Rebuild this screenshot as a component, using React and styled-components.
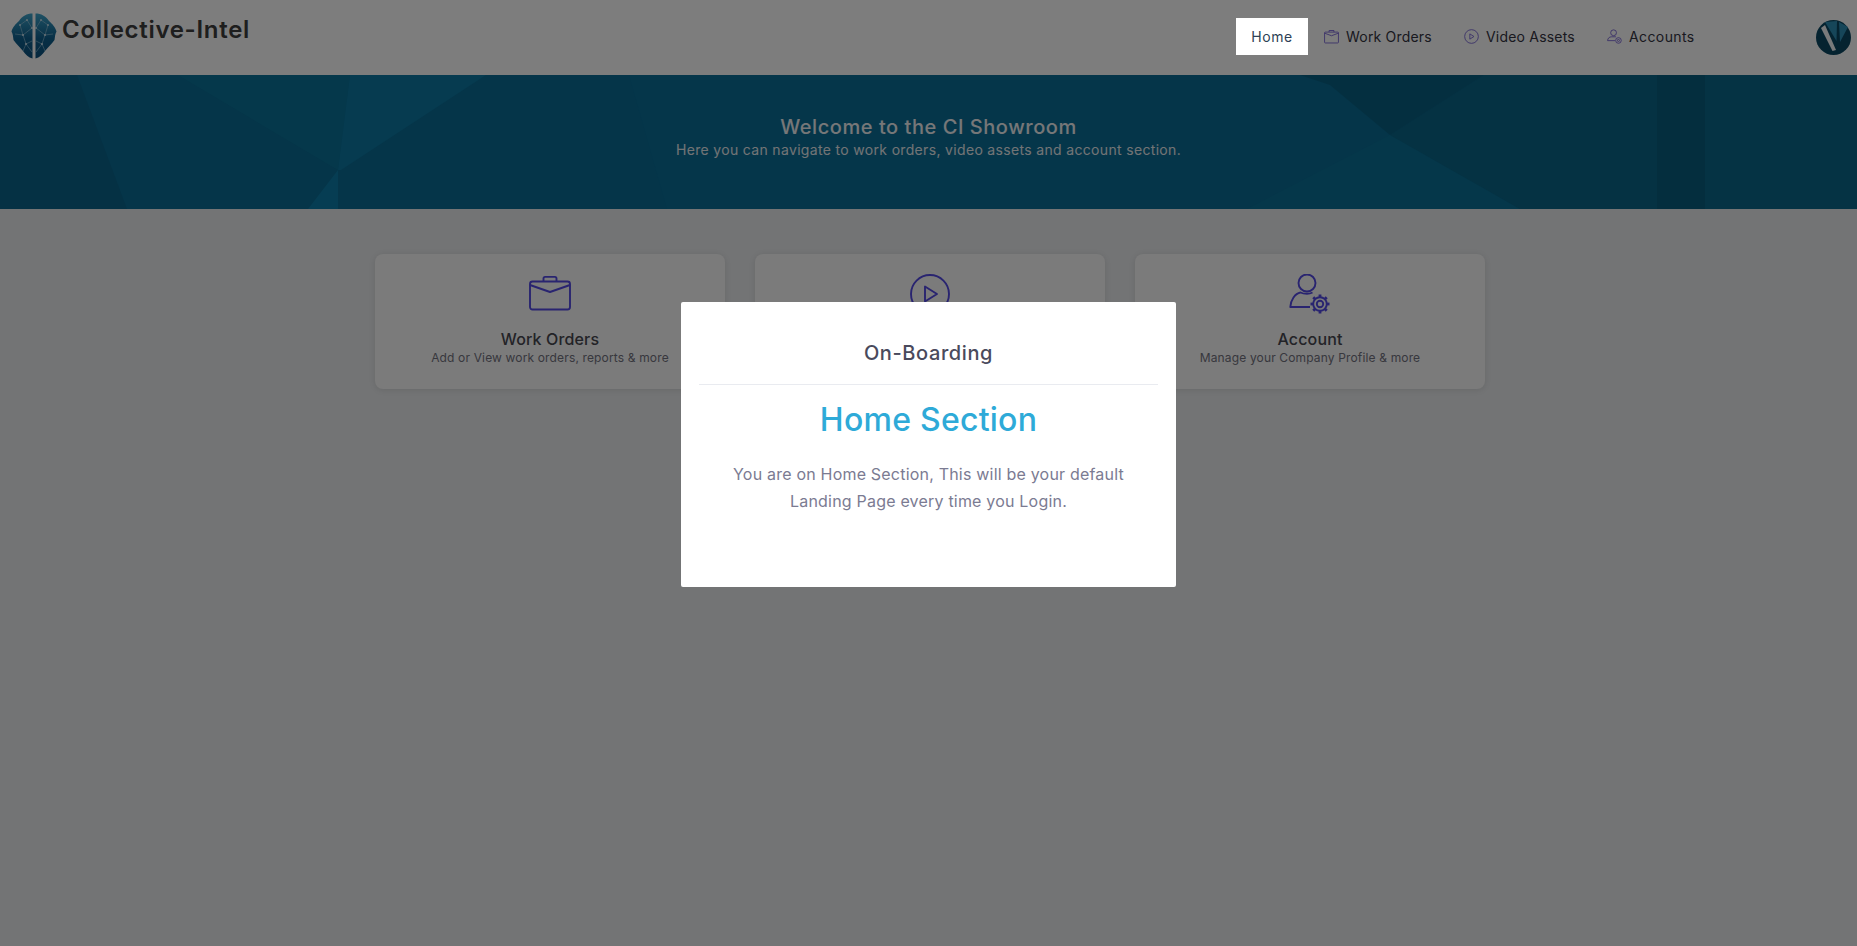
import React from "react";
import styled, { createGlobalStyle } from "styled-components";

const Global = createGlobalStyle`
  html, body { margin: 0; padding: 0; height: 100%; }
  body { background: #e6e8ea; font-family: Inter, "Noto Sans", "Liberation Sans", sans-serif; overflow: hidden; }
  * { box-sizing: border-box; }
`;

const Page = styled.div`
  width: 100%;
  height: 946px;
  display: flex;
  flex-direction: column;
`;

const Header = styled.header`
  height: 75px;
  background: #fafafa;
  display: flex;
  align-items: flex-start;
  padding: 0 6px 0 11px;
  flex: none;
`;

const Brand = styled.div`
  display: flex;
  align-items: flex-start;
  gap: 5px;
  padding-top: 13px;
`;

const BrandName = styled.div`
  font-size: 24px;
  line-height: 34px;
  font-weight: 600;
  color: #3c3c3c;
  letter-spacing: 0.7px;
`;

const Nav = styled.nav`
  margin-left: auto;
  margin-right: 105px;
  display: flex;
  align-items: center;
  height: 37px;
  margin-top: 18px;
`;

const NavItem = styled.a`
  display: flex;
  align-items: center;
  gap: 7px;
  height: 37px;
  padding: 0 16px;
  font-size: 14px;
  color: ${p => (p.$active ? "#2e3f55" : "#33333f")};
  background: ${p => (p.$active ? "#ffffff" : "transparent")};
  letter-spacing: ${p => p.$ls};
  position: ${p => (p.$active ? "relative" : "static")};
  z-index: ${p => (p.$active ? 30 : "auto")};
  width: ${p => p.$w}px;
  justify-content: ${p => (p.$active ? "center" : "flex-start")};
  white-space: nowrap;
`;

const NavIconWrap = styled.span`
  display: inline-flex;
  color: #6f5bd0;
  width: 15px;
  height: 15px;
  flex: none;
`;

const AvatarWrap = styled.div`
  width: 35px;
  height: 35px;
  margin-top: 20px;
  flex: none;
`;

const Banner = styled.section`
  position: relative;
  height: 134px;
  flex: none;
  background: #0a6a92;
  overflow: hidden;
  display: flex;
  flex-direction: column;
  align-items: center;
  padding-top: 40px;
  color: #fff;
`;

const BannerArt = styled.svg`
  position: absolute;
  inset: 0;
  width: 100%;
  height: 100%;
`;

const BannerTitle = styled.h1`
  position: relative;
  margin: 0;
  font-size: 20px;
  line-height: 24px;
  font-weight: 500;
  color: #eceef0;
  letter-spacing: 0.55px;
`;

const BannerSub = styled.p`
  position: relative;
  margin: 0;
  font-size: 14px;
  line-height: 22px;
  font-weight: 400;
  color: #e4e8eb;
  letter-spacing: 0.33px;
`;

const Cards = styled.main`
  display: flex;
  justify-content: center;
  gap: 30px;
  padding: 45px 0 0 3px;
`;

const Card = styled.article`
  width: 350px;
  height: 135px;
  background: #f6f6f6;
  border-radius: 8px;
  box-shadow: 0 1px 6px rgba(0, 0, 0, 0.1);
  display: flex;
  flex-direction: column;
  align-items: center;
  padding-top: 20px;
`;

const CardIcon = styled.svg`
  width: 42px;
  height: 42px;
  color: #5249e0;
  flex: none;
`;

const CardTitle = styled.h3`
  margin: 12px 0 0;
  font-size: 16px;
  line-height: 22px;
  font-weight: 500;
  color: #46464f;
  letter-spacing: 0.15px;
`;

const CardSub = styled.p`
  margin: 0;
  font-size: 12px;
  line-height: 16px;
  color: #70707c;
  letter-spacing: 0.15px;
`;

const Overlay = styled.div`
  position: fixed;
  inset: 0;
  background: rgba(0, 0, 0, 0.5);
  z-index: 10;
`;

const ModalLayer = styled.div`
  position: fixed;
  inset: 0;
  z-index: 20;
  display: flex;
  justify-content: center;
  align-items: flex-start;
  padding-top: 302px;
`;

const Modal = styled.div`
  width: 495px;
  height: 285px;
  background: #fff;
  border-radius: 2px;
  padding: 0 18px;
  text-align: center;
`;

const ModalHead = styled.div`
  height: 83px;
  border-bottom: 1px solid #e9ebf0;
  display: flex;
  align-items: center;
  justify-content: center;
  padding-top: 20px;
  font-size: 20px;
  font-weight: 500;
  color: #4a4a5c;
  letter-spacing: 0.6px;
`;

const ModalTitle = styled.h2`
  margin: 15px 0 0;
  font-size: 32px;
  line-height: 40px;
  font-weight: 500;
  color: #2eaad8;
  letter-spacing: 0.25px;
`;

const ModalText = styled.p`
  margin: 21px auto 0;
  width: 410px;
  font-size: 16px;
  line-height: 27px;
  color: #7b7b92;
  letter-spacing: 0.2px;
`;

const BrainLogo = () => (
  <svg width="46" height="46" viewBox="0 0 46 46" style={{ flex: "none" }}>
    <defs>
      <linearGradient id="brainFill" x1="0" y1="0" x2="0" y2="1">
        <stop offset="0" stopColor="#3ea2c8" />
        <stop offset="0.55" stopColor="#0f5f8c" />
        <stop offset="1" stopColor="#0c4f7c" />
      </linearGradient>
    </defs>
    <path d="M21.5 0.5C16 0.5 11 3 8 8C5 10.5 1.5 14.5 0.5 18.5C2 21 2 24 2.5 27C5 31 9 34 12 38C14.5 41.5 17.5 44.5 21.5 45.5Z" fill="url(#brainFill)" />
    <path d="M24.5 0.5C30 0.5 35 3 38 8C41 10.5 44.5 14.5 45.5 18.5C44 21 44 24 43.5 27C41 31 37 34 34 38C31.5 41.5 28.5 44.5 24.5 45.5Z" fill="url(#brainFill)" />
    <g stroke="#a9cfe0" strokeWidth="0.7" fill="none" opacity="0.75">
      <path d="M4 21L12 22L21 15M12 22L15 31L21 28M15 31L12 38M15 31L21 39M12 22L9 12L16 7L21 15" />
      <path d="M42 21L34 22L25 15M34 22L31 31L25 28M31 31L34 38M31 31L25 39M34 22L37 12L30 7L25 15" />
    </g>
    <g fill="#d6e8f0" opacity="0.85">
      <circle cx="12" cy="22" r="1.1" /><circle cx="15" cy="31" r="1.1" /><circle cx="9" cy="12" r="1" /><circle cx="16" cy="7" r="1" /><circle cx="21" cy="15" r="1" />
      <circle cx="34" cy="22" r="1.1" /><circle cx="31" cy="31" r="1.1" /><circle cx="37" cy="12" r="1" /><circle cx="30" cy="7" r="1" /><circle cx="25" cy="15" r="1" />
    </g>
  </svg>
);

const Avatar = () => (
  <svg width="35" height="35" viewBox="0 0 35 35">
    <circle cx="17.5" cy="17.5" r="17.5" fill="#0a4660" />
    <path d="M5 8L9 5L20 30L16.500 31Z" fill="#f3f5f6" />
    <path d="M9 2L21 1L20.500 21Z" fill="#2d8cb3" />
    <path d="M23 2L32 7L24 22Z" fill="#2d8cb3" />
  </svg>
);

const BagNav = () => (
  <svg viewBox="0 0 16 16" width="15" height="15" fill="none" stroke="currentColor" strokeWidth="0.9" strokeLinejoin="round">
    <rect x="0.6" y="3.3" width="14.8" height="11.6" rx="0.8" />
    <path d="M5.4 3.3V1.6h5.2v1.7M0.6 4.400l7.400 2.800 7.400-2.800" />
  </svg>
);

const PlayNav = () => (
  <svg viewBox="0 0 16 16" width="15" height="15" fill="none" stroke="currentColor" strokeWidth="0.9" strokeLinejoin="round">
    <circle cx="8" cy="8" r="7.3" />
    <path d="M6.2 5.2v5.6L10.6 8Z" />
  </svg>
);

const UserNav = () => (
  <svg viewBox="0 0 16 16" width="15" height="15" fill="none" stroke="currentColor" strokeWidth="0.9">
    <circle cx="7" cy="4" r="3.1" />
    <path d="M9.5 8.3H4.8C2.4 8.3 0.8 10 0.6 12.4H8.5" />
    <circle cx="12.2" cy="12.2" r="3" />
    <circle cx="12.2" cy="12.2" r="1.1" />
  </svg>
);

const gearTeeth = Array.from({ length: 8 }, (_, i) => (i * 360) / 8);

const Poly = ({ points, fill }) => <polygon points={points} fill={fill} />;

export default function App() {
  return (
    <>
      <Global />
      <Page>
        <Header>
          <Brand>
            <BrainLogo />
            <BrandName>Collective-Intel</BrandName>
          </Brand>
          <Nav>
            <NavItem $active $w={72} $ls="0.6px">Home</NavItem>
            <NavItem $w={140} $ls="0.2px"><NavIconWrap><BagNav /></NavIconWrap>Work Orders</NavItem>
            <NavItem $w={143} $ls="0.2px"><NavIconWrap><PlayNav /></NavIconWrap>Video Assets</NavItem>
            <NavItem $w={120} $ls="0.4px"><NavIconWrap><UserNav /></NavIconWrap>Accounts</NavItem>
          </Nav>
          <AvatarWrap><Avatar /></AvatarWrap>
        </Header>
        <Banner>
          <BannerArt viewBox="0 0 1857 134" preserveAspectRatio="none" aria-hidden="true">
            <Poly points="0,0 77,0 127,134 0,134" fill="#0a6288" />
            <Poly points="178,0 350,0 338,95" fill="#0b7196" />
            <Poly points="350,0 486,0 341,95 338,95" fill="#0c76a0" />
            <Poly points="308,134 338,95 338,134" fill="#0d7ba6" />
            <Poly points="629,0 667,134 1100,134 1100,0" fill="#0a6c95" />
            <Poly points="1390,60 1247,134 1520,134" fill="#0b6e94" />
            <Poly points="1390,60 1484,0 1780,0 1780,134 1520,134" fill="#0a6486" />
            <Poly points="1330,10 1390,60 1484,0 1300,0" fill="#095e80" />
            <Poly points="1657,0 1705,0 1705,134 1657,134" fill="#095c7c" />
            <Poly points="1705,0 1857,0 1857,134 1705,134" fill="#0a6688" />
          </BannerArt>
          <BannerTitle>Welcome to the CI Showroom</BannerTitle>
          <BannerSub>Here you can navigate to work orders, video assets and account section.</BannerSub>
        </Banner>
        <Cards>
          <Card>
            <CardIcon viewBox="0 0 42 42" fill="none" stroke="currentColor" strokeWidth="1.9" strokeLinejoin="round">
              <rect x="1" y="7.500" width="40" height="28" rx="2.500" />
              <path d="M14.500 7.500V4.500a1.600 1.600 0 0 1 1.600-1.600h9.800a1.600 1.600 0 0 1 1.600 1.600v3M1 11l20 7 20-7" />
            </CardIcon>
            <CardTitle>Work Orders</CardTitle>
            <CardSub>Add or View work orders, reports &amp; more</CardSub>
          </Card>
          <Card>
            <CardIcon viewBox="0 0 42 42" fill="none" stroke="currentColor" strokeWidth="1.9" strokeLinejoin="round">
              <circle cx="21" cy="20" r="19" />
              <path d="M16 12.500v15L28 20Z" />
            </CardIcon>
          </Card>
          <Card>
            <CardIcon viewBox="0 0 42 42" fill="none" stroke="currentColor" strokeWidth="1.9" strokeLinejoin="round">
              <circle cx="18" cy="9" r="8.500" />
              <path d="M23.500 18.500c-1.500 0.800-3.500 1.300-5.500 1.300-2.500 0-5-.5-6.500-1.300C6 19.500 1.700 26 1.300 33H21" />
              <circle cx="31" cy="30" r="6.800" />
              <circle cx="31" cy="30" r="3.200" />
              {gearTeeth.map(a => (
                <path key={a} d="M31 20.500v2.700" strokeWidth="2.800" transform={`rotate(${a} 31 30)`} />
              ))}
            </CardIcon>
            <CardTitle>Account</CardTitle>
            <CardSub>Manage your Company Profile &amp; more</CardSub>
          </Card>
        </Cards>
        <Overlay />
        <ModalLayer>
          <Modal>
            <ModalHead>On-Boarding</ModalHead>
            <ModalTitle>Home Section</ModalTitle>
            <ModalText>You are on Home Section, This will be your default Landing Page every time you Login.</ModalText>
          </Modal>
        </ModalLayer>
      </Page>
    </>
  );
}
